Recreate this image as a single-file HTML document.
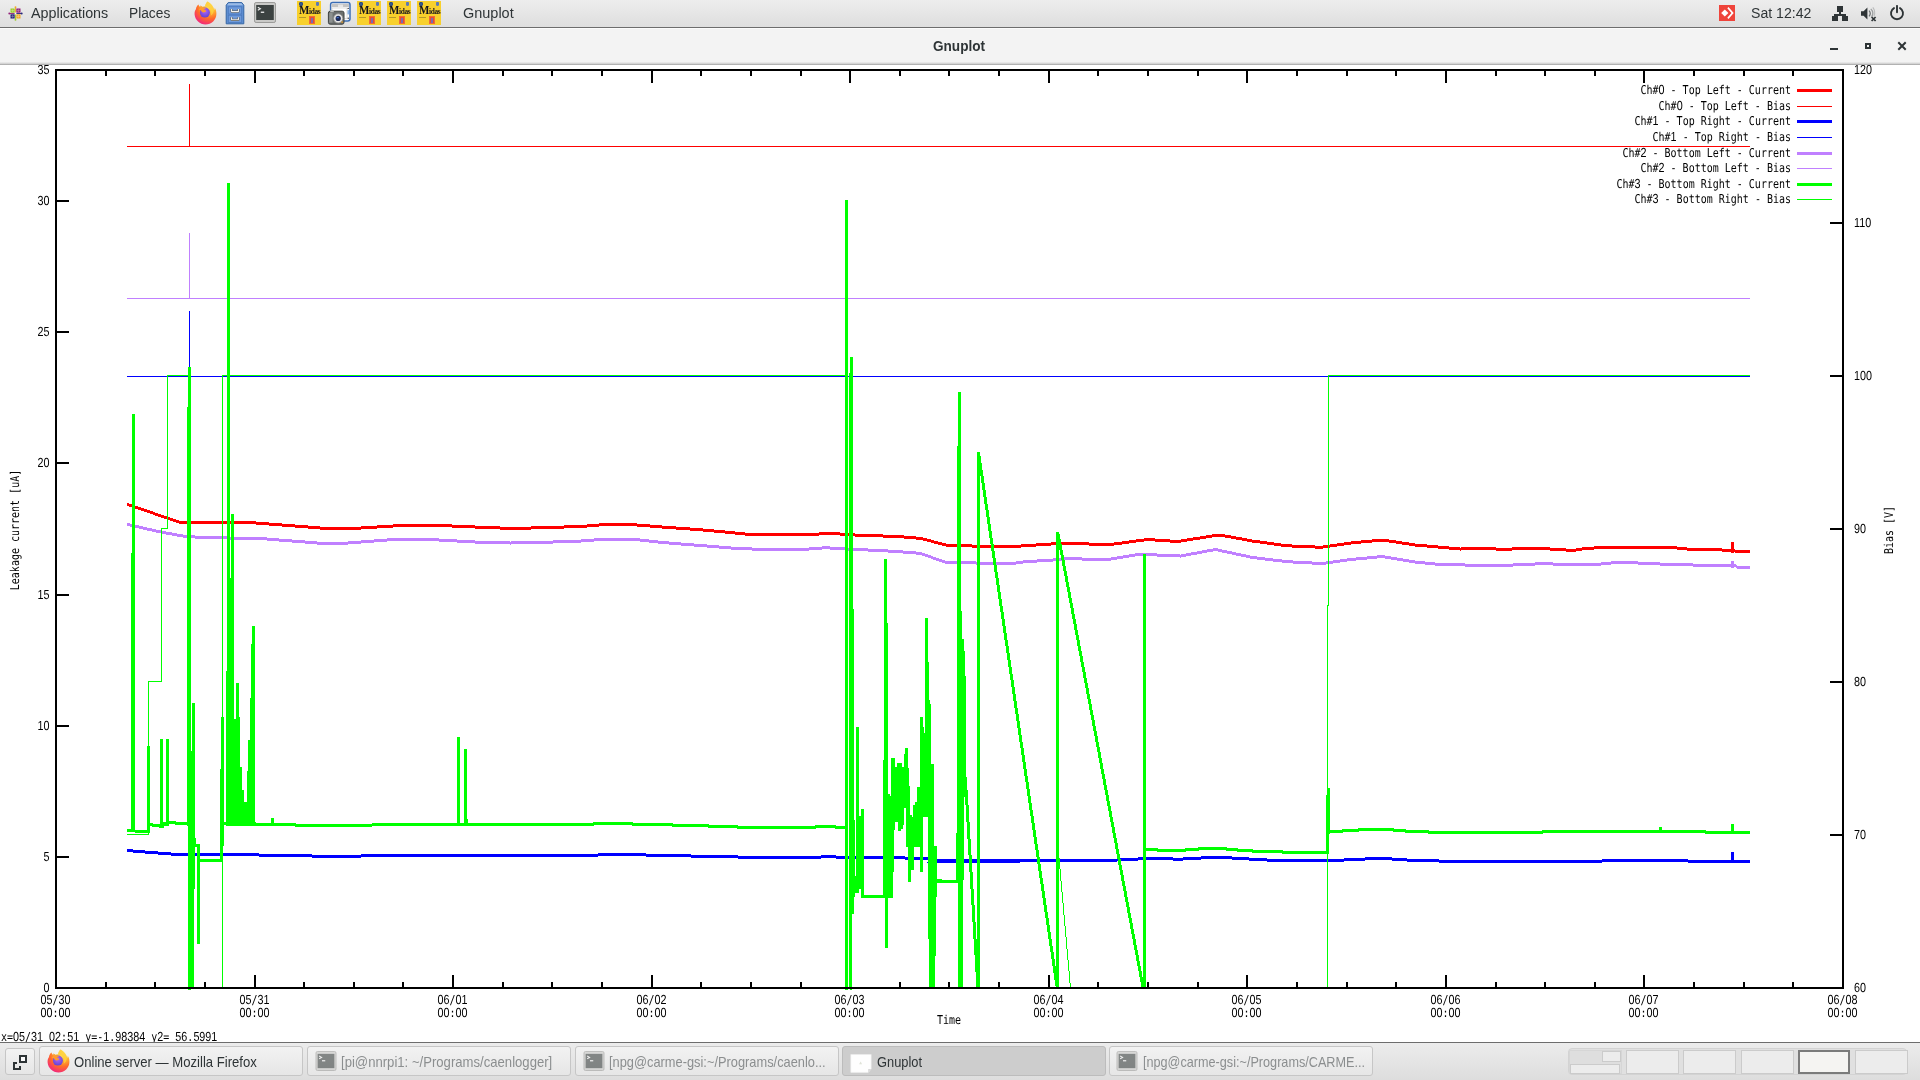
<!DOCTYPE html>
<html lang="en">
<head>
<meta charset="utf-8">
<title>Gnuplot</title>
<style>
html,body{margin:0;padding:0;}
body{width:1920px;height:1080px;overflow:hidden;background:#fff;position:relative;
  font-family:"Liberation Sans","DejaVu Sans",sans-serif;color:#2e3436;}
#topbar{position:absolute;left:0;top:0;width:1920px;height:27px;
  background:linear-gradient(#ededed,#dedede);border-bottom:1px solid #6d6d6d;}
#topbar .t{position:absolute;top:0.3px;height:27px;line-height:26px;font-size:15.5px;color:#2e3436;white-space:nowrap;transform-origin:0 50%;}
#titlebar{position:absolute;left:0;top:28px;width:1920px;height:36px;background:#f3f3f3;
  border-top:1px solid #fbfbfb;box-sizing:border-box;border-bottom:0;}
#titlebar:after{content:"";position:absolute;left:0;top:33px;width:1920px;height:3px;
  background:linear-gradient(#f0f0f0,#cfcfcf 60%,#9c9c9c);}
#titlebar .ttl{position:absolute;left:933px;top:0;height:34px;line-height:34px;white-space:nowrap;transform-origin:0 50%;
  font-size:14.5px;font-weight:bold;color:#2e3436;}
#plot .d{font-family:'Liberation Sans','DejaVu Sans',sans-serif;font-size:10.79px;}
#plot{position:absolute;left:0;top:65px;will-change:transform;}
#topbar,#titlebar,#taskbar{will-change:transform;}
#taskbar{position:absolute;left:0;top:1042px;width:1920px;height:38px;
  background:linear-gradient(#ececec,#dddddd);border-top:1px solid #6d6d6d;box-sizing:border-box;}
.tb{position:absolute;top:3px;height:30px;box-sizing:border-box;border:1px solid #c6c6c6;border-radius:3px;
  background:linear-gradient(#f2f2f2,#e6e6e6);font-size:14.4px;line-height:28px;white-space:nowrap;}
.tb span{position:absolute;top:1.3px;transform-origin:0 50%;}
.tb.dim span{color:#8b8e8f;}
.tb.act{background:#cdcdcd;border-color:#bcbcbc;}
.wsbox{position:absolute;left:1567.5px;top:5px;width:339.5px;height:27px;box-sizing:border-box;border:1px solid #d3d3d3;border-radius:4px;background:#e0e0e0;}
.ws{position:absolute;top:7px;height:23.5px;width:53px;box-sizing:border-box;border:1px solid #cbcbcb;background:#ececec;}
.ws.sel{top:7.4px;height:23.4px;width:52px;border:2px solid #7b7b7b;background:#f5f4f2;}
.ws.first{background:#dedede;border-color:#d6d6d6;}
.ws.first i{position:absolute;box-sizing:border-box;border:1px solid #cbcbcb;background:#ececec;}
.ws.first i.a{left:31.5px;top:0.2px;width:19.5px;height:11px;}
.ws.first i.b{left:-0.3px;top:13px;width:50.5px;height:10px;}
.ico{position:absolute;}
.midas{width:24px;height:24px;background:#f8d02c;overflow:hidden;font-family:"Liberation Serif","DejaVu Serif",serif;color:#14141e;}
.midas b{position:absolute;left:1.6px;top:3.2px;font-size:12.5px;line-height:13px;font-weight:bold;transform:scale(0.88,1);transform-origin:0 0;}
.midas span{position:absolute;left:12px;top:6.6px;font-size:7.4px;line-height:8px;font-weight:bold;letter-spacing:-0.35px;}
.midas i.c1{position:absolute;left:1.5px;top:0.5px;width:4.5px;height:4.5px;border-radius:50%;background:#3b5f9a;box-shadow:inset 0 0 0 1px #27467a;}
.midas i.c2{position:absolute;left:18.5px;top:0.5px;width:3.2px;height:4.2px;border-radius:1px 1px 2px 2px;background:#5a78b8;}
.midas u{position:absolute;left:2px;top:16.3px;width:6.5px;height:1px;background:#b59a2a;}
.midas em{position:absolute;left:12px;top:15px;width:6px;height:8px;background:#e6512b;box-shadow:inset 0 0 0 1px #ee6a3a;}
.midas em:after{content:"";position:absolute;left:2.3px;top:1.5px;width:1.4px;height:5px;background:#7a6ab0;}

</style>
</head>
<body>
<div id="topbar">
  <span class="t" style="left:31px;transform:scaleX(0.9241)">Applications</span>
  <span class="t" style="left:129px;transform:scaleX(0.8870)">Places</span>
  <span class="t" style="left:463px;transform:scaleX(0.9332)">Gnuplot</span>
  <span class="t" style="left:1751px;transform:scaleX(0.9093)">Sat 12:42</span>
  <svg class="ico" style="left:7px;top:5px" width="17" height="17" viewBox="-8.5 -8.5 17 17">
<rect x="-5" y="-5" width="4.2" height="4.2" fill="#9ccd2a"/><rect x="0.8" y="-5" width="4.2" height="4.2" fill="#932279"/>
<rect x="-5" y="0.8" width="4.2" height="4.2" fill="#262577"/><rect x="0.8" y="0.8" width="4.2" height="4.2" fill="#efa724"/>
<g fill="#fff" opacity="0.38"><rect x="-3.9" y="-3.9" width="2" height="2" transform="rotate(45 -2.9 -2.9)"/><rect x="1.9" y="-3.9" width="2" height="2" transform="rotate(45 2.9 -2.9)"/>
<rect x="-3.9" y="1.9" width="2" height="2" transform="rotate(45 -2.9 2.9)"/><rect x="1.9" y="1.9" width="2" height="2" transform="rotate(45 2.9 2.9)"/></g>
<path d="M-0.45 -0.6v-5.2h0.9v5.2z" fill="#efa724"/><circle cx="0" cy="-6.2" r="0.95" fill="#efa724"/>
<path d="M0.6 -0.45h5.2v0.9h-5.2z" fill="#262577"/><circle cx="6.2" cy="0" r="0.95" fill="#262577"/>
<path d="M-0.45 0.6v5.2h0.9v-5.2z" fill="#9ccd2a"/><circle cx="0" cy="6.2" r="0.95" fill="#9ccd2a"/>
<path d="M-0.6 -0.45h-5.2v0.9h5.2z" fill="#932279"/><circle cx="-6.2" cy="0" r="0.95" fill="#932279"/>
<circle cx="0" cy="0" r="0.9" fill="#fafafa"/>
</svg>
<svg class="ico" style="left:193px;top:1px" width="24" height="24" viewBox="0 0 24 24">
<defs>
<radialGradient id="ffat" cx="0.7" cy="0.15" r="1"><stop offset="0" stop-color="#fff36b"/><stop offset="0.3" stop-color="#ffbd2f"/><stop offset="0.6" stop-color="#ff6a2a"/><stop offset="0.85" stop-color="#f5316f"/><stop offset="1" stop-color="#e31587"/></radialGradient>
<radialGradient id="ffbt" cx="0.5" cy="0.35" r="0.7"><stop offset="0" stop-color="#b266f5"/><stop offset="1" stop-color="#5b3fd0"/></radialGradient>
</defs>
<path fill="url(#ffat)" d="M14.6 0.6c-1.5 1.2-2.3 3-2.4 4.6-0.9-0.1-2 0.1-2.9 0.6-0.4-0.8-1.6-1.3-2.3-1.4 0.3 0.6 0.4 1.3 0.3 1.8-0.9-0.5-1.6-1.6-1.8-2.6-1.3 1-2.3 2.7-2.5 4.3-1.1 1.6-1.6 3.5-1.4 5.6 0.5 5.6 5.200000000000001 10 10.9 10 6 0 10.9-4.8 10.9-10.8 0-2.2-0.5-4.4-1.7-6 0 1-0.2 1.7-0.5 2.2-0.4-3.300000000000001-2.9000000000000004-6.300000000000001-6.6-8.3z"/>
<circle cx="11.9" cy="11.6" r="5" fill="url(#ffbt)"/>
<path fill="#ff9a2e" d="M5.6 8.8c1-1.7 2.8-2.6 4.9-2.4 1.2 0.1 2.3 0.6 3 1.5-1.1-0.3-2.2-0.1-2.8 0.5 1.3 0.1 2.3 0.9 2.4 1.9-0.7 1-2.3 1.4-3.5 0.9-1-0.4-1.6-1.2-1.6-2.1-0.8 0.2-1.7 0.1-2.4-0.3z"/>
<path fill="#ffcf3f" opacity="0.9" d="M14.6 0.6c-1.5 1.2-2.3 3-2.4 4.6 2.6 0.3 5 2.2 5.8 4.7 0.5 1.5 0.4 3.1-0.2 4.5 2-1.2 3-3.4 2.9-5.5-0.6-3.3-2.7-6.400000000000001-6.1-8.3z"/>
</svg>
<svg class="ico" style="left:225px;top:1px" width="20" height="24" viewBox="0 0 20 24">
<path d="M3.2 1.6h13.6l2 2.6v18.6h-17.6v-18.6z" fill="#5f8fd3" stroke="#3465a4" stroke-width="1"/>
<path d="M3.6 2.2h12.8l1.6 2.1h-16z" fill="#9cbce6"/>
<rect x="3.3" y="5.8" width="13.4" height="7.2" fill="#6f9bdb" stroke="#4a78bd" stroke-width="0.8"/>
<rect x="3.3" y="14.2" width="13.4" height="7.2" fill="#6f9bdb" stroke="#4a78bd" stroke-width="0.8"/>
<path d="M6.6 8v2.6h6.8v-2.6" fill="none" stroke="#555753" stroke-width="2.2" stroke-linejoin="round"/>
<path d="M6.6 8v2.6h6.8v-2.6" fill="none" stroke="#f3f3f0" stroke-width="1.1" stroke-linejoin="round"/>
<path d="M6.6 16.2v2.6h6.8v-2.6" fill="none" stroke="#555753" stroke-width="2.2" stroke-linejoin="round"/>
<path d="M6.6 16.2v2.6h6.8v-2.6" fill="none" stroke="#f3f3f0" stroke-width="1.1" stroke-linejoin="round"/>
</svg>
<svg class="ico" style="left:254px;top:2px" width="22" height="21" viewBox="0 0 22 21"><rect x="0.5" y="0.5" width="21" height="20" rx="1.6" fill="#c9c9c7" stroke="#9b9b99" stroke-width="1"/><rect x="2.2" y="3" width="17.6" height="15" fill="#3c4241"/><path d="M3.8 5.2l2.6 1.5-2.6 1.5" fill="none" stroke="#f0f0f0" stroke-width="1.1"/><rect x="6.8" y="9.6" width="3.4" height="1.3" fill="#f0f0f0"/></svg>
<div class="ico midas" style="left:297px;top:1px"><i class="c1"></i><i class="c2"></i><b>M</b><span>idas</span><u></u><em></em></div>
<svg class="ico" style="left:326px;top:1px" width="26" height="25" viewBox="0 0 26 25">
<rect x="4.6" y="1.6" width="19.4" height="18.4" rx="2.2" fill="#fdfdfd" stroke="#3a6db5" stroke-width="1.5"/>
<rect x="5.6" y="2.8" width="17.4" height="3.2" fill="#c4c4c4"/><rect x="12" y="3.6" width="5" height="2.4" fill="#e6e6e6"/>
<rect x="6" y="7" width="15" height="10.6" fill="#fff" stroke="#c8c8c8" stroke-width="0.6"/>
<rect x="21.6" y="9.2" width="1.2" height="4.2" fill="#6aa0e0"/><circle cx="22.2" cy="7.4" r="0.7" fill="#333"/><circle cx="22.2" cy="17.2" r="0.7" fill="#333"/>
<rect x="2.4" y="10.2" width="15.6" height="13" rx="1.8" fill="#6c706f" stroke="#3f4241" stroke-width="1"/>
<rect x="4.2" y="9.2" width="3.6" height="2" fill="#bdbfbe"/>
<rect x="3.2" y="12" width="3.4" height="9.6" fill="#8c908f"/>
<circle cx="12.2" cy="17.4" r="4.6" fill="#e6e6e6" stroke="#8a8a8a" stroke-width="0.8"/>
<circle cx="12.2" cy="17.4" r="2.6" fill="#1d2a55"/><rect x="10.6" y="16" width="2.2" height="1.2" fill="#3e69c4"/>
<rect x="15.4" y="20.4" width="1.4" height="1.4" fill="#f0a020"/>
</svg>
<div class="ico midas" style="left:357px;top:1px"><i class="c1"></i><i class="c2"></i><b>M</b><span>idas</span><u></u><em></em></div>
<div class="ico midas" style="left:387px;top:1px"><i class="c1"></i><i class="c2"></i><b>M</b><span>idas</span><u></u><em></em></div>
<div class="ico midas" style="left:417px;top:1px"><i class="c1"></i><i class="c2"></i><b>M</b><span>idas</span><u></u><em></em></div>
<svg class="ico" style="left:1719px;top:5px" width="16" height="16" viewBox="0 0 16 16">
<rect width="16" height="16" fill="#ef443b"/>
<path d="M2.2 8l3.6-3.6 3.6 3.6-3.6 3.6z" fill="#fff"/>
<path d="M8.3 3.3l1.2-1.2 5.2 5.9-5.2 5.9-1.2-1.2 4.1-4.7z" fill="#fff"/>
</svg>
<svg class="ico" style="left:1832px;top:6px" width="16" height="16" viewBox="0 0 16 16" shape-rendering="crispEdges">
<rect x="5" y="0" width="6" height="6" fill="#2e3436"/><rect x="7" y="6" width="2" height="3" fill="#2e3436"/>
<rect x="2" y="8" width="12" height="2" fill="#2e3436"/><rect x="2" y="8" width="2" height="3" fill="#2e3436"/><rect x="12" y="8" width="2" height="3" fill="#2e3436"/>
<rect x="0" y="10" width="6" height="5" fill="#2e3436"/><rect x="10" y="10" width="6" height="5" fill="#2e3436"/>
</svg>
<svg class="ico" style="left:1860px;top:6px" width="18" height="16" viewBox="0 0 18 16">
<path d="M1 5.2h2.6l3.8-3.7v12l-3.800000000000001-3.7h-2.5999999999999996z" fill="#2e3436"/>
<path d="M9 4.6a4 4 0 0 1 0 5.8" fill="none" stroke="#6b6f70" stroke-width="1.3"/>
<path d="M10.8 2.8a6.4 6.4 0 0 1 0.8 8" fill="none" stroke="#9a9d9e" stroke-width="1.2"/>
<path d="M12.8 1.4a8.6 8.6 0 0 1 1.2 8.6" fill="none" stroke="#babcbc" stroke-width="1.1"/>
<path d="M11.6 11l4 4M15.6 11l-4 4" stroke="#2e3436" stroke-width="1.7"/>
</svg>
<svg class="ico" style="left:1889px;top:5px" width="16" height="16" viewBox="0 0 16 16">
<path d="M5 3.1a6 6 0 1 0 6 0" fill="none" stroke="#2e3436" stroke-width="1.9" stroke-linecap="round"/>
<path d="M8 0.9v6.4" stroke="#2e3436" stroke-width="1.9" stroke-linecap="round"/>
</svg>
</div>
<div id="titlebar"><span class="ttl" style="transform:scaleX(0.9362)">Gnuplot</span>
  <svg class="ico" style="left:1824px;top:9px" width="90" height="18" viewBox="0 0 90 18" shape-rendering="crispEdges">
<rect x="6" y="10" width="8" height="2" fill="#2e3436"/>
<rect x="42" y="6" width="4" height="4" fill="none" stroke="#2e3436" stroke-width="2"/>
<path d="M75 5l6 6M81 5l-6 6" stroke="#2e3436" stroke-width="2" shape-rendering="auto" stroke-linecap="square"/>
</svg>
</div>
<svg id="plot" width="1920" height="978" viewBox="0 65 1920 978" shape-rendering="crispEdges" fill="none" stroke-linejoin="miter" stroke-linecap="butt">
<g id="ticks" stroke="#000" stroke-width="2">
<path d="M106 988v-6 M106 70v6 M155 988v-6 M155 70v6 M205 988v-6 M205 70v6 M255 988v-13 M255 70v13 M304 988v-6 M304 70v6 M354 988v-6 M354 70v6 M403 988v-6 M403 70v6 M453 988v-13 M453 70v13 M503 988v-6 M503 70v6 M552 988v-6 M552 70v6 M602 988v-6 M602 70v6 M652 988v-13 M652 70v13 M701 988v-6 M701 70v6 M751 988v-6 M751 70v6 M801 988v-6 M801 70v6 M850 988v-13 M850 70v13 M900 988v-6 M900 70v6 M949 988v-6 M949 70v6 M999 988v-6 M999 70v6 M1049 988v-13 M1049 70v13 M1098 988v-6 M1098 70v6 M1148 988v-6 M1148 70v6 M1198 988v-6 M1198 70v6 M1247 988v-13 M1247 70v13 M1297 988v-6 M1297 70v6 M1347 988v-6 M1347 70v6 M1396 988v-6 M1396 70v6 M1446 988v-13 M1446 70v13 M1496 988v-6 M1496 70v6 M1545 988v-6 M1545 70v6 M1595 988v-6 M1595 70v6 M1644 988v-13 M1644 70v13 M1694 988v-6 M1694 70v6 M1744 988v-6 M1744 70v6 M1793 988v-6 M1793 70v6 M56 857h13 M56 726h13 M56 595h13 M56 463h13 M56 332h13 M56 201h13 M1843 835h-13 M1843 682h-13 M1843 529h-13 M1843 376h-13 M1843 223h-13"/>
</g>
<g id="curves">
<path fill="#ff0000" stroke="none" d="M127 503h2v3h-2zM129 504h3v3h-3zM132 505h3v3h-3zM135 506h3v3h-3zM138 507h3v3h-3zM141 508h3v3h-3zM144 509h3v3h-3zM147 510h3v3h-3zM150 511h3v3h-3zM153 512h2v3h-2zM155 513h3v3h-3zM158 514h3v3h-3zM161 515h3v3h-3zM164 516h3v3h-3zM167 517h3v3h-3zM170 518h3v3h-3zM173 519h3v3h-3zM176 520h3v3h-3zM179 521h77v3h-77zM256 522h13v3h-13zM269 523h13v3h-13zM282 524h13v3h-13zM295 525h13v3h-13zM308 526h12v3h-12zM320 527h41v3h-41zM361 526h16v3h-16zM377 525h16v3h-16zM393 524h59v3h-59zM452 525h23v3h-23zM475 526h25v3h-25zM500 527h31v3h-31zM531 526h33v3h-33zM564 525h23v3h-23zM587 524h12v3h-12zM599 523h38v3h-38zM637 524h13v3h-13zM650 525h12v3h-12zM662 526h14v3h-14zM676 527h14v3h-14zM690 528h13v3h-13zM703 529h11v3h-11zM714 530h11v3h-11zM725 531h10v3h-10zM735 532h10v3h-10zM745 533h74v3h-74zM819 532h21v3h-21zM840 533h15v3h-15zM855 534h28v3h-28zM883 535h21v3h-21zM904 536h12v3h-12zM916 537h7v3h-7zM923 538h4v3h-4zM927 539h4v3h-4zM931 540h3v3h-3zM934 541h4v3h-4zM938 542h4v3h-4zM942 543h4v3h-4zM946 544h26v3h-26zM972 545h49v3h-49zM1021 544h15v3h-15zM1036 543h15v3h-15zM1051 542h38v3h-38zM1089 543h25v3h-25zM1114 542h8v3h-8zM1122 541h7v3h-7zM1129 540h7v3h-7zM1136 539h8v3h-8zM1144 538h11v3h-11zM1155 539h15v3h-15zM1170 540h11v3h-11zM1181 539h6v3h-6zM1187 538h6v3h-6zM1193 537h7v3h-7zM1200 536h6v3h-6zM1206 535h6v3h-6zM1212 534h13v3h-13zM1225 535h6v3h-6zM1231 536h5v3h-5zM1236 537h6v3h-6zM1242 538h5v3h-5zM1247 539h5v3h-5zM1252 540h8v3h-8zM1260 541h7v3h-7zM1267 542h7v3h-7zM1274 543h7v3h-7zM1281 544h11v3h-11zM1292 545h23v3h-23zM1315 546h8v3h-8zM1323 545h7v3h-7zM1330 544h7v3h-7zM1337 543h7v3h-7zM1344 542h7v3h-7zM1351 541h10v3h-10zM1361 540h11v3h-11zM1372 539h17v3h-17zM1389 540h7v3h-7zM1396 541h6v3h-6zM1402 542h7v3h-7zM1409 543h6v3h-6zM1415 544h12v3h-12zM1427 545h11v3h-11zM1438 546h11v3h-11zM1449 547h11v3h-11zM1460 548h1v3h-1zM1461 547h35v3h-35zM1496 548h16v3h-16zM1512 547h38v3h-38zM1550 548h16v3h-16zM1566 549h10v3h-10zM1576 548h6v3h-6zM1582 547h12v3h-12zM1594 546h83v3h-83zM1677 547h10v3h-10zM1687 548h35v3h-35zM1722 549h13v3h-13zM1735 550h15v3h-15zM1731 542h3v11h-3z"/>
<path fill="#ff0000" stroke="none" d="M127 146h1623v1h-1623zM189 84h1v63h-1z"/>
<path fill="#0000ff" stroke="none" d="M127 849h6v3h-6zM133 850h12v3h-12zM145 851h13v3h-13zM158 852h13v3h-13zM171 853h88v3h-88zM259 854h53v3h-53zM312 855h49v3h-49zM361 854h237v3h-237zM598 853h48v3h-48zM646 854h45v3h-45zM691 855h47v3h-47zM738 856h83v3h-83zM821 855h15v3h-15zM836 856h69v3h-69zM905 857h23v3h-23zM928 859h189v3h-189zM1117 858h21v3h-21zM1138 857h35v3h-35zM1173 858h10v3h-10zM1183 857h18v3h-18zM1201 856h31v3h-31zM1232 857h17v3h-17zM1249 858h18v3h-18zM1267 859h77v3h-77zM1344 858h21v3h-21zM1365 857h27v3h-27zM1392 858h15v3h-15zM1407 859h32v3h-32zM1439 860h163v3h-163zM1602 859h86v3h-86zM1688 860h62v3h-62zM928 857h1v5h-1zM1731 852h3v11h-3zM927 862h93v1h-93z"/>
<path fill="#0000ff" stroke="none" d="M127 376h1623v1h-1623zM189 311h1v66h-1z"/>
<path fill="#c080ff" stroke="none" d="M127 523h3v3h-3zM130 524h4v3h-4zM134 525h5v3h-5zM139 526h4v3h-4zM143 527h4v3h-4zM147 528h5v3h-5zM152 529h4v3h-4zM156 530h5v3h-5zM161 531h5v3h-5zM166 532h6v3h-6zM172 533h5v3h-5zM177 534h6v3h-6zM183 535h12v3h-12zM195 536h35v3h-35zM230 537h37v3h-37zM267 538h12v3h-12zM279 539h13v3h-13zM292 540h13v3h-13zM305 541h12v3h-12zM317 542h31v3h-31zM348 541h13v3h-13zM361 540h13v3h-13zM374 539h13v3h-13zM387 538h52v3h-52zM439 539h18v3h-18zM457 540h18v3h-18zM475 541h35v3h-35zM510 542h1v3h-1zM511 541h42v3h-42zM553 540h28v3h-28zM581 539h13v3h-13zM594 538h46v3h-46zM640 539h9v3h-9zM649 540h9v3h-9zM658 541h11v3h-11zM669 542h12v3h-12zM681 543h13v3h-13zM694 544h13v3h-13zM707 545h12v3h-12zM719 546h12v3h-12zM731 547h21v3h-21zM752 548h57v3h-57zM809 547h13v3h-13zM822 546h8v3h-8zM830 547h18v3h-18zM848 548h20v3h-20zM868 549h20v3h-20zM888 550h15v3h-15zM903 551h13v3h-13zM916 552h6v3h-6zM922 553h3v3h-3zM925 554h3v3h-3zM928 555h3v3h-3zM931 556h2v3h-2zM933 557h3v3h-3zM936 558h3v3h-3zM939 559h3v3h-3zM942 560h3v3h-3zM945 561h31v3h-31zM976 562h40v3h-40zM1016 561h7v3h-7zM1023 560h14v3h-14zM1037 559h16v3h-16zM1053 558h9v3h-9zM1062 557h20v3h-20zM1082 558h29v3h-29zM1111 557h6v3h-6zM1117 556h6v3h-6zM1123 555h6v3h-6zM1129 554h6v3h-6zM1135 553h22v3h-22zM1157 554h23v3h-23zM1180 555h1v3h-1zM1181 554h5v3h-5zM1186 553h5v3h-5zM1191 552h6v3h-6zM1197 551h5v3h-5zM1202 550h5v3h-5zM1207 549h6v3h-6zM1213 548h5v3h-5zM1218 549h4v3h-4zM1222 550h5v3h-5zM1227 551h5v3h-5zM1232 552h4v3h-4zM1236 553h5v3h-5zM1241 554h5v3h-5zM1246 555h4v3h-4zM1250 556h7v3h-7zM1257 557h8v3h-8zM1265 558h8v3h-8zM1273 559h9v3h-9zM1282 560h11v3h-11zM1293 561h19v3h-19zM1312 562h14v3h-14zM1326 561h7v3h-7zM1333 560h7v3h-7zM1340 559h7v3h-7zM1347 558h9v3h-9zM1356 557h11v3h-11zM1367 556h10v3h-10zM1377 555h8v3h-8zM1385 556h6v3h-6zM1391 557h6v3h-6zM1397 558h6v3h-6zM1403 559h6v3h-6zM1409 560h6v3h-6zM1415 561h10v3h-10zM1425 562h10v3h-10zM1435 563h30v3h-30zM1465 564h48v3h-48zM1513 563h22v3h-22zM1535 562h18v3h-18zM1553 563h48v3h-48zM1601 562h10v3h-10zM1611 561h27v3h-27zM1638 562h22v3h-22zM1660 563h33v3h-33zM1693 564h43v3h-43zM1736 565h1v3h-1zM1737 566h13v3h-13zM1731 561h3v7h-3z"/>
<path fill="#c080ff" stroke="none" d="M127 298h1623v1h-1623zM189 233h1v66h-1z"/>
<path fill="#00ff00" stroke="none" d="M132 414h3v418h-3zM131 553h1v279h-1zM147 746h3v87h-3zM160 739h3v88h-3zM166 739h3v87h-3zM187 407h1v419h-1zM188 367h3v623h-3zM191 751h1v238h-1zM192 703h2v286h-2zM194 703h1v186h-1zM195 838h1v9h-1zM195 844h5v3h-5zM197 844h3v100h-3zM197 859h26v3h-26zM220 769h3v93h-3zM221 717h3v129h-3zM227 183h3v643h-3zM231 514h3v312h-3zM230 578h1v248h-1zM226 671h1v155h-1zM236 683h3v143h-3zM234 719h2v107h-2zM239 717h1v109h-1zM240 767h2v59h-2zM242 790h2v36h-2zM244 802h3v24h-3zM247 771h1v55h-1zM252 626h3v200h-3zM251 644h1v182h-1zM250 698h1v128h-1zM248 740h2v86h-2zM271 818h3v8h-3zM457 737h3v89h-3zM464 749h3v77h-3zM467 819h1v7h-1zM845 200h3v790h-3zM849 373h1v616h-1zM850 357h2v633h-2zM852 357h1v557h-1zM853 609h1v305h-1zM854 820h1v77h-1zM855 876h1v17h-1zM856 727h3v166h-3zM859 816h2v73h-2zM861 809h3v89h-3zM861 895h32v3h-32zM883 760h1v138h-1zM884 559h3v339h-3zM887 623h1v275h-1zM888 794h2v104h-2zM890 796h1v102h-1zM891 758h2v140h-2zM893 758h1v114h-1zM894 758h1v72h-1zM885 897h3v51h-3zM895 767h2v55h-2zM897 763h1v59h-1zM898 763h3v68h-3zM901 763h1v66h-1zM902 767h1v62h-1zM903 767h1v58h-1zM904 754h1v54h-1zM905 748h1v60h-1zM906 748h2v99h-2zM908 768h1v114h-1zM909 786h1v96h-1zM910 815h1v67h-1zM911 815h1v55h-1zM912 817h1v53h-1zM913 805h1v65h-1zM914 805h1v42h-1zM915 802h2v45h-2zM917 787h3v60h-3zM920 717h3v155h-3zM923 727h1v90h-1zM924 733h1v84h-1zM925 618h3v199h-3zM928 662h1v277h-1zM929 700h1v289h-1zM930 704h1v285h-1zM931 764h3v225h-3zM934 846h1v143h-1zM935 846h1v110h-1zM936 846h1v51h-1zM936 879h6v4h-6zM941 880h18v3h-18zM956 833h1v50h-1zM957 446h1v437h-1zM958 392h3v597h-3zM961 611h1v378h-1zM962 639h1v350h-1zM963 639h1v241h-1zM964 651h1v146h-1zM965 676h1v119h-1zM966 777h1v20h-1zM977 452h3v537h-3zM980 456h1v15h-1zM1056 532h3v457h-3zM1143 554h3v435h-3zM1326 795h3v59h-3zM1327 788h3v46h-3zM1659 827h3v6h-3zM1731 824h3v10h-3zM127 829h8v3h-8zM135 830h15v3h-15zM150 823h3v3h-3zM152 824h9v3h-9zM159 825h5v3h-5zM163 822h6v3h-6zM163 823h4v3h-4zM169 821h7v3h-7zM175 822h13v3h-13zM224 822h32v3h-32zM255 823h41v3h-41zM295 824h77v3h-77zM372 823h222v3h-222zM593 822h40v3h-40zM632 823h41v3h-41zM672 824h37v3h-37zM708 825h30v3h-30zM737 826h79v3h-79zM815 825h21v3h-21zM835 826h11v3h-11zM1146 848h12v3h-12zM1157 849h29v3h-29zM1185 848h14v3h-14zM1198 847h29v3h-29zM1226 848h12v3h-12zM1237 849h16v3h-16zM1252 850h31v3h-31zM1282 851h46v3h-46zM1330 830h13v3h-13zM1342 829h17v3h-17zM1358 828h36v3h-36zM1393 829h13v3h-13zM1405 830h24v3h-24zM1428 831h115v3h-115zM1542 830h164v3h-164zM1705 831h45v3h-45zM965 790h3v15h-3zM966 805h3v17h-3zM967 822h3v17h-3zM968 839h3v16h-3zM969 855h3v17h-3zM970 872h3v17h-3zM971 889h3v16h-3zM972 905h3v17h-3zM973 922h3v17h-3zM974 939h3v16h-3zM975 955h3v17h-3zM976 972h3v16h-3zM977 988h3v1h-3zM977 452h3v4h-3zM978 456h3v7h-3zM979 463h3v7h-3zM980 470h3v6h-3zM981 476h3v7h-3zM982 483h3v7h-3zM983 490h3v7h-3zM984 497h3v7h-3zM985 504h3v6h-3zM986 510h3v7h-3zM987 517h3v7h-3zM988 524h3v7h-3zM989 531h3v7h-3zM990 538h3v6h-3zM991 544h3v7h-3zM992 551h3v7h-3zM993 558h3v7h-3zM994 565h3v7h-3zM995 572h3v6h-3zM996 578h3v7h-3zM997 585h3v7h-3zM998 592h3v7h-3zM999 599h3v7h-3zM1000 606h3v6h-3zM1001 612h3v7h-3zM1002 619h3v7h-3zM1003 626h3v7h-3zM1004 633h3v7h-3zM1005 640h3v6h-3zM1006 646h3v7h-3zM1007 653h3v7h-3zM1008 660h3v7h-3zM1009 667h3v7h-3zM1010 674h3v6h-3zM1011 680h3v7h-3zM1012 687h3v7h-3zM1013 694h3v7h-3zM1014 701h3v7h-3zM1015 708h3v6h-3zM1016 714h3v7h-3zM1017 721h3v7h-3zM1018 728h3v7h-3zM1019 735h3v7h-3zM1020 742h3v6h-3zM1021 748h3v7h-3zM1022 755h3v7h-3zM1023 762h3v7h-3zM1024 769h3v7h-3zM1025 776h3v6h-3zM1026 782h3v7h-3zM1027 789h3v7h-3zM1028 796h3v7h-3zM1029 803h3v7h-3zM1030 810h3v6h-3zM1031 816h3v7h-3zM1032 823h3v7h-3zM1033 830h3v7h-3zM1034 837h3v7h-3zM1035 844h3v6h-3zM1036 850h3v7h-3zM1037 857h3v7h-3zM1038 864h3v7h-3zM1039 871h3v7h-3zM1040 878h3v6h-3zM1041 884h3v7h-3zM1042 891h3v7h-3zM1043 898h3v7h-3zM1044 905h3v7h-3zM1045 912h3v6h-3zM1046 918h3v7h-3zM1047 925h3v7h-3zM1048 932h3v7h-3zM1049 939h3v7h-3zM1050 946h3v6h-3zM1051 952h3v7h-3zM1052 959h3v7h-3zM1053 966h3v7h-3zM1054 973h3v7h-3zM1055 980h3v6h-3zM1056 986h3v3h-3zM1056 532h3v2h-3zM1057 534h3v5h-3zM1058 539h3v5h-3zM1059 544h3v6h-3zM1060 550h3v5h-3zM1061 555h3v5h-3zM1062 560h3v6h-3zM1063 566h3v5h-3zM1064 571h3v5h-3zM1065 576h3v6h-3zM1066 582h3v5h-3zM1067 587h3v5h-3zM1068 592h3v6h-3zM1069 598h3v5h-3zM1070 603h3v5h-3zM1071 608h3v6h-3zM1072 614h3v5h-3zM1073 619h3v5h-3zM1074 624h3v6h-3zM1075 630h3v5h-3zM1076 635h3v5h-3zM1077 640h3v6h-3zM1078 646h3v5h-3zM1079 651h3v5h-3zM1080 656h3v6h-3zM1081 662h3v5h-3zM1082 667h3v5h-3zM1083 672h3v6h-3zM1084 678h3v5h-3zM1085 683h3v5h-3zM1086 688h3v6h-3zM1087 694h3v5h-3zM1088 699h3v5h-3zM1089 704h3v6h-3zM1090 710h3v5h-3zM1091 715h3v5h-3zM1092 720h3v6h-3zM1093 726h3v5h-3zM1094 731h3v5h-3zM1095 736h3v6h-3zM1096 742h3v5h-3zM1097 747h3v5h-3zM1098 752h3v6h-3zM1099 758h3v5h-3zM1100 763h3v6h-3zM1101 769h3v5h-3zM1102 774h3v5h-3zM1103 779h3v6h-3zM1104 785h3v5h-3zM1105 790h3v5h-3zM1106 795h3v6h-3zM1107 801h3v5h-3zM1108 806h3v5h-3zM1109 811h3v6h-3zM1110 817h3v5h-3zM1111 822h3v5h-3zM1112 827h3v6h-3zM1113 833h3v5h-3zM1114 838h3v5h-3zM1115 843h3v6h-3zM1116 849h3v5h-3zM1117 854h3v5h-3zM1118 859h3v6h-3zM1119 865h3v5h-3zM1120 870h3v5h-3zM1121 875h3v6h-3zM1122 881h3v5h-3zM1123 886h3v5h-3zM1124 891h3v6h-3zM1125 897h3v5h-3zM1126 902h3v5h-3zM1127 907h3v6h-3zM1128 913h3v5h-3zM1129 918h3v5h-3zM1130 923h3v6h-3zM1131 929h3v5h-3zM1132 934h3v5h-3zM1133 939h3v6h-3zM1134 945h3v5h-3zM1135 950h3v5h-3zM1136 955h3v6h-3zM1137 961h3v5h-3zM1138 966h3v5h-3zM1139 971h3v6h-3zM1140 977h3v5h-3zM1141 982h3v5h-3zM1142 987h3v2h-3z"/>
<path fill="#00ff00" stroke="none" d="M127 834h22v1h-22zM148 681h1v154h-1zM148 681h14v1h-14zM161 528h1v154h-1zM161 528h7v1h-7zM167 375h1v154h-1zM167 375h23v1h-23zM222 375h1v614h-1zM222 375h625v1h-625zM1327 605h1v384h-1zM1327 605h2v1h-2zM1328 375h1v231h-1zM1328 375h422v1h-422zM1058 852h1v6h-1zM1059 858h1v11h-1zM1060 869h1v12h-1zM1061 881h1v11h-1zM1062 892h1v11h-1zM1063 903h1v12h-1zM1064 915h1v11h-1zM1065 926h1v11h-1zM1066 937h1v12h-1zM1067 949h1v11h-1zM1068 960h1v11h-1zM1069 971h1v12h-1zM1070 983h1v6h-1z"/>
</g>
<rect id="frame" x="56" y="70" width="1787" height="918" stroke="#000" stroke-width="2"/>
<g id="labels" fill="#000" stroke="none" font-family="'DejaVu Sans Mono','Liberation Mono',monospace" font-size="10px" shape-rendering="auto" text-rendering="geometricPrecision">
<text transform="translate(49.4 992) scale(1 1.22)" text-anchor="end" ><tspan class="d">0</tspan></text>
<text transform="translate(49.4 861) scale(1 1.22)" text-anchor="end" ><tspan class="d">5</tspan></text>
<text transform="translate(49.4 730) scale(1 1.22)" text-anchor="end" ><tspan class="d">10</tspan></text>
<text transform="translate(49.4 599) scale(1 1.22)" text-anchor="end" ><tspan class="d">15</tspan></text>
<text transform="translate(49.4 467) scale(1 1.22)" text-anchor="end" ><tspan class="d">20</tspan></text>
<text transform="translate(49.4 336) scale(1 1.22)" text-anchor="end" ><tspan class="d">25</tspan></text>
<text transform="translate(49.4 205) scale(1 1.22)" text-anchor="end" ><tspan class="d">30</tspan></text>
<text transform="translate(49.4 74) scale(1 1.22)" text-anchor="end" ><tspan class="d">35</tspan></text>
<text transform="translate(1854 992) scale(1 1.22)" text-anchor="start" ><tspan class="d">60</tspan></text>
<text transform="translate(1854 839) scale(1 1.22)" text-anchor="start" ><tspan class="d">70</tspan></text>
<text transform="translate(1854 686) scale(1 1.22)" text-anchor="start" ><tspan class="d">80</tspan></text>
<text transform="translate(1854 533) scale(1 1.22)" text-anchor="start" ><tspan class="d">90</tspan></text>
<text transform="translate(1854 380) scale(1 1.22)" text-anchor="start" ><tspan class="d">100</tspan></text>
<text transform="translate(1854 227) scale(1 1.22)" text-anchor="start" ><tspan class="d">110</tspan></text>
<text transform="translate(1854 74) scale(1 1.22)" text-anchor="start" ><tspan class="d">120</tspan></text>
<text transform="translate(55.5 1004) scale(1 1.22)" text-anchor="middle" ><tspan class="d">05</tspan>/<tspan class="d">30</tspan></text>
<text transform="translate(55.5 1017) scale(1 1.22)" text-anchor="middle" ><tspan class="d">00</tspan>:<tspan class="d">00</tspan></text>
<text transform="translate(254.5 1004) scale(1 1.22)" text-anchor="middle" ><tspan class="d">05</tspan>/<tspan class="d">31</tspan></text>
<text transform="translate(254.5 1017) scale(1 1.22)" text-anchor="middle" ><tspan class="d">00</tspan>:<tspan class="d">00</tspan></text>
<text transform="translate(452.5 1004) scale(1 1.22)" text-anchor="middle" ><tspan class="d">06</tspan>/<tspan class="d">01</tspan></text>
<text transform="translate(452.5 1017) scale(1 1.22)" text-anchor="middle" ><tspan class="d">00</tspan>:<tspan class="d">00</tspan></text>
<text transform="translate(651.5 1004) scale(1 1.22)" text-anchor="middle" ><tspan class="d">06</tspan>/<tspan class="d">02</tspan></text>
<text transform="translate(651.5 1017) scale(1 1.22)" text-anchor="middle" ><tspan class="d">00</tspan>:<tspan class="d">00</tspan></text>
<text transform="translate(849.5 1004) scale(1 1.22)" text-anchor="middle" ><tspan class="d">06</tspan>/<tspan class="d">03</tspan></text>
<text transform="translate(849.5 1017) scale(1 1.22)" text-anchor="middle" ><tspan class="d">00</tspan>:<tspan class="d">00</tspan></text>
<text transform="translate(1048.5 1004) scale(1 1.22)" text-anchor="middle" ><tspan class="d">06</tspan>/<tspan class="d">04</tspan></text>
<text transform="translate(1048.5 1017) scale(1 1.22)" text-anchor="middle" ><tspan class="d">00</tspan>:<tspan class="d">00</tspan></text>
<text transform="translate(1246.5 1004) scale(1 1.22)" text-anchor="middle" ><tspan class="d">06</tspan>/<tspan class="d">05</tspan></text>
<text transform="translate(1246.5 1017) scale(1 1.22)" text-anchor="middle" ><tspan class="d">00</tspan>:<tspan class="d">00</tspan></text>
<text transform="translate(1445.5 1004) scale(1 1.22)" text-anchor="middle" ><tspan class="d">06</tspan>/<tspan class="d">06</tspan></text>
<text transform="translate(1445.5 1017) scale(1 1.22)" text-anchor="middle" ><tspan class="d">00</tspan>:<tspan class="d">00</tspan></text>
<text transform="translate(1643.5 1004) scale(1 1.22)" text-anchor="middle" ><tspan class="d">06</tspan>/<tspan class="d">07</tspan></text>
<text transform="translate(1643.5 1017) scale(1 1.22)" text-anchor="middle" ><tspan class="d">00</tspan>:<tspan class="d">00</tspan></text>
<text transform="translate(1842.5 1004) scale(1 1.22)" text-anchor="middle" ><tspan class="d">06</tspan>/<tspan class="d">08</tspan></text>
<text transform="translate(1842.5 1017) scale(1 1.22)" text-anchor="middle" ><tspan class="d">00</tspan>:<tspan class="d">00</tspan></text>
<text transform="translate(949 1024) scale(1 1.22)" text-anchor="middle" >Time</text>
<text transform="translate(1 1041) scale(1 1.22)" text-anchor="start" >x=<tspan class="d">05</tspan>/<tspan class="d">31</tspan> <tspan class="d">02</tspan>:<tspan class="d">51</tspan> y=-<tspan class="d">1</tspan>.<tspan class="d">98384</tspan> y<tspan class="d">2</tspan>= <tspan class="d">56</tspan>.<tspan class="d">5991</tspan></text>
<text transform="translate(19 530) rotate(-90) scale(1 1.22)" text-anchor="middle">Leakage current [uA]</text>
<text transform="translate(1893 530) rotate(-90) scale(1 1.22)" text-anchor="middle">Bias [V]</text>
<text transform="translate(1791 94) scale(1 1.22)" text-anchor="end" >Ch#<tspan class="d">0</tspan> - Top Left - Current</text>
<text transform="translate(1791 110) scale(1 1.22)" text-anchor="end" >Ch#<tspan class="d">0</tspan> - Top Left - Bias</text>
<text transform="translate(1791 125) scale(1 1.22)" text-anchor="end" >Ch#<tspan class="d">1</tspan> - Top Right - Current</text>
<text transform="translate(1791 141) scale(1 1.22)" text-anchor="end" >Ch#<tspan class="d">1</tspan> - Top Right - Bias</text>
<text transform="translate(1791 157) scale(1 1.22)" text-anchor="end" >Ch#<tspan class="d">2</tspan> - Bottom Left - Current</text>
<text transform="translate(1791 172) scale(1 1.22)" text-anchor="end" >Ch#<tspan class="d">2</tspan> - Bottom Left - Bias</text>
<text transform="translate(1791 188) scale(1 1.22)" text-anchor="end" >Ch#<tspan class="d">3</tspan> - Bottom Right - Current</text>
<text transform="translate(1791 203) scale(1 1.22)" text-anchor="end" >Ch#<tspan class="d">3</tspan> - Bottom Right - Bias</text>
</g>
<g id="legendlines" fill="none">
<rect x="1797" y="89" width="35" height="3" fill="#ff0000"/>
<rect x="1797" y="106" width="35" height="1" fill="#ff0000"/>
<rect x="1797" y="120" width="35" height="3" fill="#0000ff"/>
<rect x="1797" y="137" width="35" height="1" fill="#0000ff"/>
<rect x="1797" y="152" width="35" height="3" fill="#c080ff"/>
<rect x="1797" y="168" width="35" height="1" fill="#c080ff"/>
<rect x="1797" y="183" width="35" height="3" fill="#00ff00"/>
<rect x="1797" y="199" width="35" height="1" fill="#00ff00"/>
</g>
</svg>
<div id="taskbar">
  <div class="tb" style="left:5px;width:30px;top:5px;height:27px"></div>
  <div class="tb" style="left:39px;width:264px"><span class="tt" style="left:34px;transform:scaleX(0.9109)">Online server — Mozilla Firefox</span></div>
  <div class="tb dim" style="left:307px;width:264px"><span class="tt" style="left:33.4px;transform:scaleX(0.9113)">[pi@nnrpi1: ~/Programs/caenlogger]</span></div>
  <div class="tb dim" style="left:575px;width:264px"><span class="tt" style="left:33.4px;transform:scaleX(0.8917)">[npg@carme-gsi:~/Programs/caenlo...</span></div>
  <div class="tb act" style="left:842px;width:264px"><span class="tt" style="left:34px;transform:scaleX(0.8923)">Gnuplot</span></div>
  <div class="tb dim" style="left:1109px;width:264px"><span class="tt" style="left:33.4px;transform:scaleX(0.8792)">[npg@carme-gsi:~/Programs/CARME...</span></div>
    <div class="wsbox"></div>
<div class="ws first" style="left:1569.0px"><i class="a"></i><i class="b"></i></div>
<div class="ws" style="left:1626.2px"></div>
<div class="ws" style="left:1683.3px"></div>
<div class="ws" style="left:1740.5px"></div>
<div class="ws sel" style="left:1797.9px"></div>
<div class="ws" style="left:1854.8px"></div>
<svg class="ico" style="left:12px;top:12px" width="16" height="16" viewBox="0 0 16 16" shape-rendering="crispEdges">
<rect x="8" y="1" width="6" height="6" fill="#fafafa" stroke="#2e3436" stroke-width="2"/>
<path d="M5 8h-3v6h6v-3" fill="none" stroke="#2e3436" stroke-width="2"/>
</svg>
<svg class="ico" style="left:46px;top:6px" width="24" height="24" viewBox="0 0 24 24">
<defs>
<radialGradient id="ffab" cx="0.7" cy="0.15" r="1"><stop offset="0" stop-color="#fff36b"/><stop offset="0.3" stop-color="#ffbd2f"/><stop offset="0.6" stop-color="#ff6a2a"/><stop offset="0.85" stop-color="#f5316f"/><stop offset="1" stop-color="#e31587"/></radialGradient>
<radialGradient id="ffbb" cx="0.5" cy="0.35" r="0.7"><stop offset="0" stop-color="#b266f5"/><stop offset="1" stop-color="#5b3fd0"/></radialGradient>
</defs>
<path fill="url(#ffab)" d="M14.6 0.6c-1.5 1.2-2.3 3-2.4 4.6-0.9-0.1-2 0.1-2.9 0.6-0.4-0.8-1.6-1.3-2.3-1.4 0.3 0.6 0.4 1.3 0.3 1.8-0.9-0.5-1.6-1.6-1.8-2.6-1.3 1-2.3 2.7-2.5 4.3-1.1 1.6-1.6 3.5-1.4 5.6 0.5 5.6 5.200000000000001 10 10.9 10 6 0 10.9-4.8 10.9-10.8 0-2.2-0.5-4.4-1.7-6 0 1-0.2 1.7-0.5 2.2-0.4-3.300000000000001-2.9000000000000004-6.300000000000001-6.6-8.3z"/>
<circle cx="11.9" cy="11.6" r="5" fill="url(#ffbb)"/>
<path fill="#ff9a2e" d="M5.6 8.8c1-1.7 2.8-2.6 4.9-2.4 1.2 0.1 2.3 0.6 3 1.5-1.1-0.3-2.2-0.1-2.8 0.5 1.3 0.1 2.3 0.9 2.4 1.9-0.7 1-2.3 1.4-3.5 0.9-1-0.4-1.6-1.2-1.6-2.1-0.8 0.2-1.7 0.1-2.4-0.3z"/>
<path fill="#ffcf3f" opacity="0.9" d="M14.6 0.6c-1.5 1.2-2.3 3-2.4 4.6 2.6 0.3 5 2.2 5.8 4.7 0.5 1.5 0.4 3.1-0.2 4.5 2-1.2 3-3.4 2.9-5.5-0.6-3.3-2.7-6.400000000000001-6.1-8.3z"/>
</svg>
<svg class="ico" style="left:315px;top:8px" width="22" height="20" viewBox="0 0 22 21" opacity="0.6"><rect x="0.5" y="0.5" width="21" height="20" rx="1.6" fill="#c9c9c7" stroke="#9b9b99" stroke-width="1"/><rect x="2.2" y="3" width="17.6" height="15" fill="#3c4241"/><path d="M3.8 5.2l2.6 1.5-2.6 1.5" fill="none" stroke="#f0f0f0" stroke-width="1.1"/><rect x="6.8" y="9.6" width="3.4" height="1.3" fill="#f0f0f0"/></svg>
<svg class="ico" style="left:583px;top:8px" width="22" height="20" viewBox="0 0 22 21" opacity="0.6"><rect x="0.5" y="0.5" width="21" height="20" rx="1.6" fill="#c9c9c7" stroke="#9b9b99" stroke-width="1"/><rect x="2.2" y="3" width="17.6" height="15" fill="#3c4241"/><path d="M3.8 5.2l2.6 1.5-2.6 1.5" fill="none" stroke="#f0f0f0" stroke-width="1.1"/><rect x="6.8" y="9.6" width="3.4" height="1.3" fill="#f0f0f0"/></svg>
<svg class="ico" style="left:850px;top:11px" width="22" height="19" viewBox="0 0 22 19">
<path d="M0.8 0.4h20.4v14.6l-3 3.4h-17.4z" fill="#fefefe" stroke="#ececec" stroke-width="0.6"/>
<path d="M21.2 15l-3 3.4v-3.4z" fill="#d8d8d8"/>
<path d="M10.6 7.6l1.5 2.6h-3z" fill="#dfe3d8"/></svg>
<svg class="ico" style="left:1116px;top:8px" width="22" height="20" viewBox="0 0 22 21" opacity="0.6"><rect x="0.5" y="0.5" width="21" height="20" rx="1.6" fill="#c9c9c7" stroke="#9b9b99" stroke-width="1"/><rect x="2.2" y="3" width="17.6" height="15" fill="#3c4241"/><path d="M3.8 5.2l2.6 1.5-2.6 1.5" fill="none" stroke="#f0f0f0" stroke-width="1.1"/><rect x="6.8" y="9.6" width="3.4" height="1.3" fill="#f0f0f0"/></svg>
</div>
</body>
</html>
